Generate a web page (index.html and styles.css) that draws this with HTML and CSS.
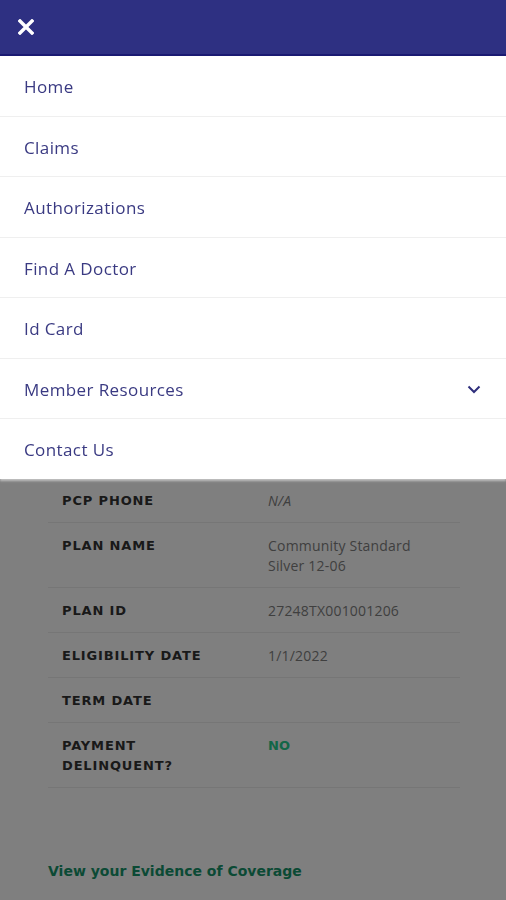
FILE: index.html
```html
<!DOCTYPE html>
<html lang="en">
<head>
    <meta charset="UTF-8">
    <meta name="viewport" content="width=device-width, initial-scale=1.0">
    <title>Member Plan</title>
    <link rel="stylesheet" href="styles.css">
</head>
<body>
    <div class="page">
        <div class="top-bar"></div>
        <div class="plan-card">
            <div class="plan-table">
                <div class="row"><span class="label">PCP PHONE</span><span class="value italic">N/A</span></div>
                <div class="row"><span class="label">PLAN NAME</span><span class="value">Community Standard Silver 12-06</span></div>
                <div class="row"><span class="label">PLAN ID</span><span class="value">27248TX001001206</span></div>
                <div class="row"><span class="label">ELIGIBILITY DATE</span><span class="value">1/1/2022</span></div>
                <div class="row"><span class="label">TERM DATE</span><span class="value"></span></div>
                <div class="row"><span class="label">PAYMENT DELINQUENT?</span><span class="value status">NO</span></div>
            </div>
            <a class="coverage-link" href="#">View your Evidence of Coverage</a>
        </div>
    </div>

    <div class="overlay"></div>

    <nav class="side-menu">
        <div class="menu-header">
            <button class="close-btn" aria-label="Close menu">
                <svg width="16" height="16" viewBox="0 0 16 16">
                    <path d="M2 2 L14 14 M14 2 L2 14" stroke="#fff" stroke-width="3.4" stroke-linecap="square" fill="none"/>
                </svg>
            </button>
        </div>
        <ul class="menu-list">
            <li><a href="#">Home</a></li>
            <li><a href="#">Claims</a></li>
            <li><a href="#">Authorizations</a></li>
            <li><a href="#">Find A Doctor</a></li>
            <li><a href="#">Id Card</a></li>
            <li>
                <a href="#" class="has-sub">Member Resources
                    <svg width="14" height="9" viewBox="0 0 14 9">
                        <path d="M1.5 1.5 L7 7 L12.5 1.5" stroke="#2f2f7c" stroke-width="2" fill="none"/>
                    </svg>
                </a>
            </li>
            <li><a href="#">Contact Us</a></li>
        </ul>
    </nav>
</body>
</html>
```

FILE: styles.css
```css
body {
    margin: 0;
    font-family: "Open Sans", Arial, sans-serif;
    background-color: #fff;
    height: 900px;
    overflow: hidden;
}
.top-bar {
    height: 56px;
    background-color: #2e3082;
}
.plan-card {
    padding: 0 46px 0 48px;
}
.plan-table {
    margin-top: 422px;
}
.row {
    display: flex;
    padding: 13px 0 11px 14px;
    border-bottom: 1px solid #ececec;
    line-height: 20px;
    font-size: 14px;
}
.label {
    width: 206px;
    flex-shrink: 0;
    font-family: "DejaVu Sans", Verdana, sans-serif;
    font-weight: bold;
    font-size: 13px;
    letter-spacing: 0.85px;
    color: #333;
    padding-right: 30px;
    box-sizing: border-box;
}
.value {
    width: 150px;
    color: #7e7e7e;
    letter-spacing: 0.2px;
}
.italic {
    font-style: italic;
}
.status {
    font-family: "DejaVu Sans", Verdana, sans-serif;
    font-weight: bold;
    font-size: 13px;
    color: #26cc8e;
}
.coverage-link {
    display: block;
    margin-top: 75px;
    font-family: "DejaVu Sans", Verdana, sans-serif;
    font-weight: bold;
    font-size: 14px;
    color: #17946a;
    text-decoration: none;
}

.overlay {
    position: fixed;
    inset: 0;
    background: rgba(0, 0, 0, 0.5);
}
.side-menu {
    position: fixed;
    top: 0;
    left: 0;
    right: 0;
    background: #fff;
    box-shadow: 0 2px 2px rgba(255, 255, 255, 0.5);
}
.menu-header {
    height: 54px;
    background-color: #2e3082;
    border-bottom: 2px solid #1a1a72;
    display: flex;
    align-items: center;
    padding-left: 18px;
}
.close-btn {
    background: none;
    border: none;
    padding: 0;
    width: 16px;
    height: 16px;
    cursor: pointer;
}
.close-btn svg {
    display: block;
}
.menu-list {
    list-style: none;
    margin: 0;
    padding: 0;
}
.menu-list li {
    border-bottom: 1px solid #efefef;
}
.menu-list li:last-child {
    border-bottom: none;
}
.menu-list a {
    display: flex;
    align-items: center;
    justify-content: space-between;
    height: 59.5px;
    padding: 2px 24px 0;
    box-sizing: border-box;
    font-size: 17px;
    letter-spacing: 0.4px;
    color: #3a3a82;
    text-decoration: none;
}
.has-sub svg {
    margin-right: 1px;
}
```
